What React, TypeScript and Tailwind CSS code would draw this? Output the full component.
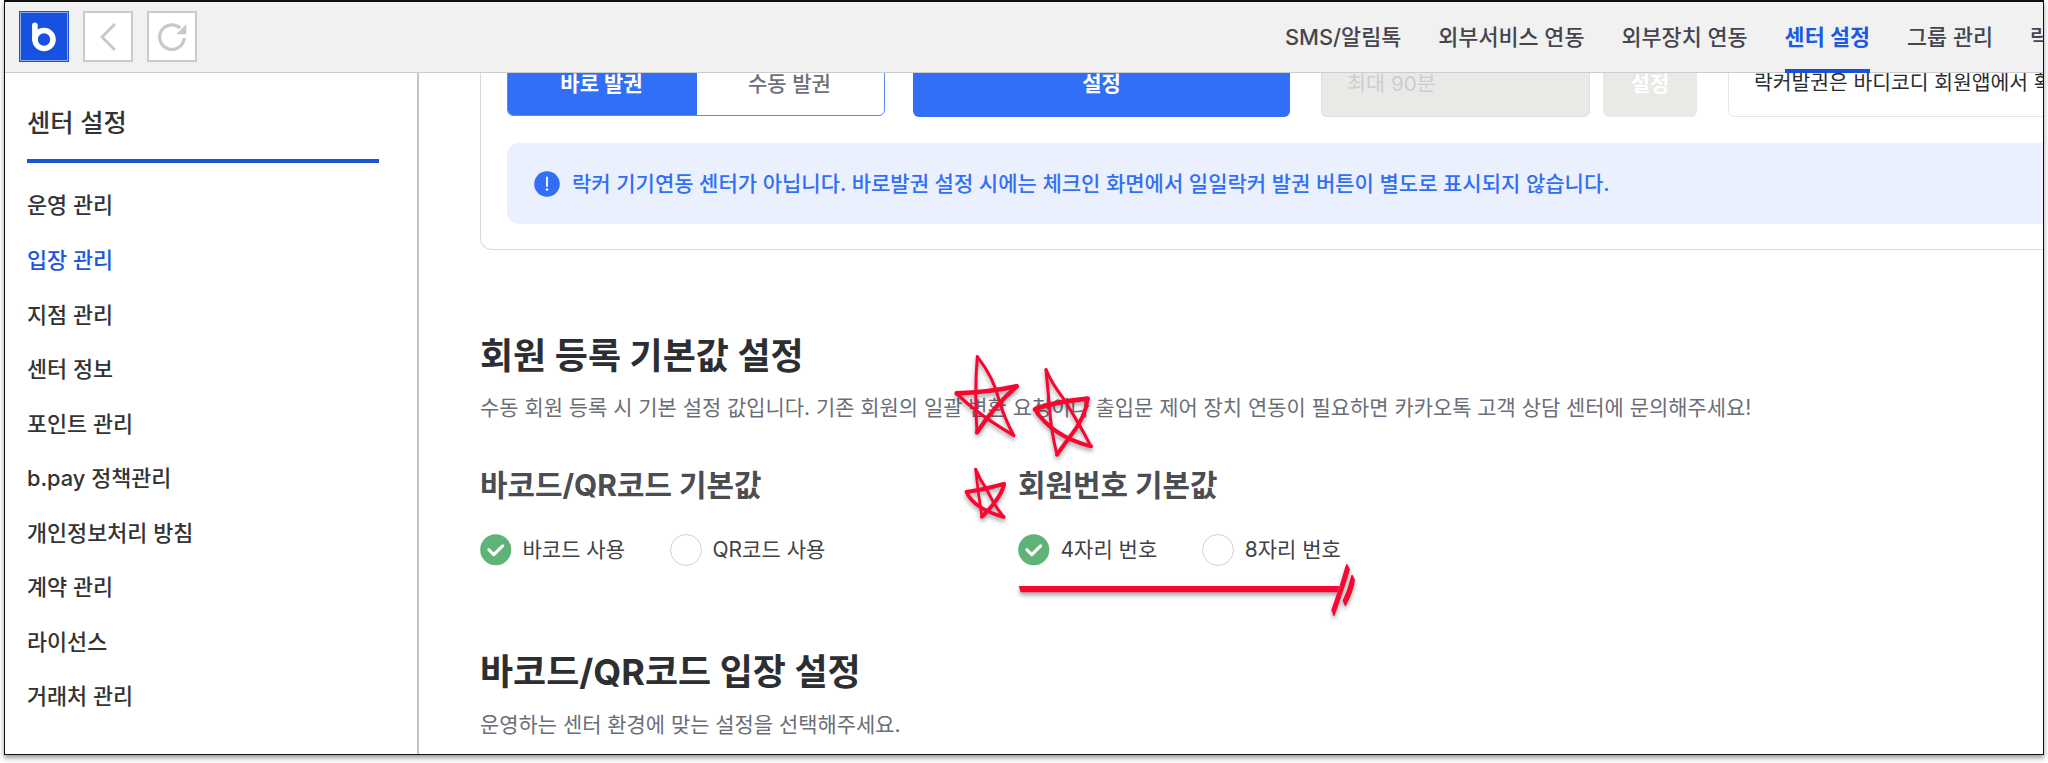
const menus = [
  "운영 관리",
  "입장 관리",
  "지점 관리",
  "센터 정보",
  "포인트 관리",
  "b.pay 정책관리",
  "개인정보처리 방침",
  "계약 관리",
  "라이선스",
  "거래처 관리",
];

const tabs = ["SMS/알림톡", "외부서비스 연동", "외부장치 연동", "센터 설정", "그룹 관리", "락커"];

const Header = () => (
  <header className="relative z-10 flex h-[71px] shrink-0 items-start border-b border-[#cdcdcd] bg-[#f1f1f1] pl-[14px] pt-[9px]">
    <div className="flex h-[51px] w-[50px] items-center justify-center bg-[#1850e0] outline outline-1 -outline-offset-2 outline-[#8fabf0]">
      <svg viewBox="0 0 24 30" className="h-[30px] w-6" fill="none" stroke="#fff" strokeWidth="5.6" strokeLinecap="round">
        <path d="M2.9 3.2v14" />
        <circle cx="12" cy="17.5" r="9" />
      </svg>
    </div>
    <button className="ml-[14px] flex h-[51px] w-[50px] items-center justify-center border-2 border-[#cacaca] bg-white">
      <svg viewBox="0 0 16 28" className="h-7 w-4" fill="none" stroke="#c8c8c8" strokeWidth="3">
        <path d="M15 1 2 14l13 13" />
      </svg>
    </button>
    <button className="ml-[14px] flex h-[51px] w-[50px] items-center justify-center border-2 border-[#cacaca] bg-white">
      <svg viewBox="0 0 30 30" className="h-[30px] w-[30px]" fill="none" stroke="#c8c8c8" strokeWidth="3.2">
        <path d="M27.2 16a12.3 12.3 0 1 1-4-10" />
        <path d="M29.3 2v10.3h-10z" fill="#c8c8c8" stroke="none" />
      </svg>
    </button>

    <nav className="ml-[1088px] flex w-[758px] gap-[37px] overflow-hidden whitespace-nowrap text-[21.8px] font-medium text-[#44454f]">
      {tabs.map((tab) => (
        <a
          key={tab}
          className={
            tab === "센터 설정"
              ? "flex h-[62px] items-center border-b-4 border-[#1850d8] pb-[6px] font-bold text-[#1a5ae6]"
              : "flex h-[62px] items-center pb-[10px]"
          }
        >
          {tab}
        </a>
      ))}
    </nav>
  </header>
);

const Sidebar = () => (
  <aside className="w-[414px] shrink-0 border-r-2 border-[#c4c4c4] pl-[22px] pr-[38px] pt-[32px] text-[#333]">
    <h2 className="flex h-[36px] items-center text-[25.3px] font-medium">센터 설정</h2>
    <div className="mt-[18px] h-1 bg-[#1c56d2]" />
    <ul className="mt-[15.5px] text-[21.8px] font-medium">
      {menus.map((menu) => (
        <li
          key={menu}
          className={menu === "입장 관리" ? "flex h-[54.55px] items-center text-[#1c56dc]" : "flex h-[54.55px] items-center"}
        >
          {menu}
        </li>
      ))}
    </ul>
  </aside>
);

const Radio = ({ label, checked = false }: { label: string; checked?: boolean }) => (
  <label className="flex h-8 items-center gap-[11px] whitespace-nowrap text-[21px] text-[#404246]">
    {checked ? (
      <svg viewBox="0 0 32 32" className="h-[31.5px] w-[31.5px]" fill="none">
        <circle cx="16" cy="16" r="15.8" fill="#5fb377" />
        <path d="m9 16 5 5 9-9" stroke="#fff" strokeWidth="3.2" strokeLinecap="round" strokeLinejoin="round" />
      </svg>
    ) : (
      <span className="h-[31.5px] w-[31.5px] rounded-full border border-[#d0d0d0] bg-white" />
    )}
    {label}
  </label>
);

const LockerCard = () => (
  <section className="h-[177px] w-[1700px] shrink-0 rounded-bl-xl border-b border-l border-[#d9dbde] pl-[26px] text-[21px]">
    <div className="flex h-[44px] items-end whitespace-nowrap">
      <div className="mb-px flex h-[60px] w-[378px] overflow-hidden rounded-b-md border border-[#5b8ae8]">
        <div className="flex w-[189px] items-center justify-center bg-[#306ff6] pb-[5px] pr-[2px] font-bold text-white">바로 발권</div>
        <div className="flex flex-1 items-center justify-center pb-[5px] pr-[2px] font-medium text-[#6d7078]">수동 발권</div>
      </div>
      <div className="ml-[28px] flex h-[66px] w-[377px] items-center justify-center rounded-md bg-[#306ff6] pb-[1px] font-bold text-white">
        설정
      </div>
      <div className="ml-[31px] flex h-[66px] w-[269px] items-center rounded-md border border-[#dfe0dd] bg-[#e9eae6] pb-[1px] pl-[25px] text-[20.7px] text-[#cccdd1]">
        최대 90분
      </div>
      <div className="ml-[13px] flex h-[66px] w-[94px] items-center justify-center rounded-md bg-[#e9eae6] pb-[1px] font-bold text-white">
        설정
      </div>
      <div className="ml-[31px] flex h-[66px] w-[400px] items-center rounded-md border border-[#e4e5e7] pb-[1px] pl-[25px] text-[20.4px] text-[#2c2d30]">
        락커발권은 바디코디 회원앱에서 확인
      </div>
    </div>
    <div className="mt-[26px] flex h-[81px] items-center rounded-xl bg-[#ebf0fe] pl-[27px] font-medium text-[#306ff6]">
      <svg viewBox="0 0 26 26" className="h-[26px] w-[26px]">
        <circle cx="13" cy="13" r="12.8" fill="#306ff6" />
        <path d="M13 6.5v8.5" stroke="#fff" strokeWidth="1.8" strokeLinecap="round" />
        <circle cx="13" cy="18.5" r="1.2" fill="#fff" />
      </svg>
      <span className="ml-[12px] whitespace-nowrap">
        락커 기기연동 센터가 아닙니다. 바로발권 설정 시에는 체크인 화면에서 일일락커 발권 버튼이 별도로 표시되지 않습니다.
      </span>
    </div>
  </section>
);

/* hand-drawn red marks lying over the page */
const Marks = () => (
  <svg
    viewBox="0 0 1440 900"
    className="pointer-events-none absolute left-[920px] top-[330px] z-20 h-[300px] w-[480px] drop-shadow-[0_3px_2px_rgba(0,0,0,0.35)]"
    fill="none"
    stroke="#fb0530"
    strokeLinecap="round"
    strokeLinejoin="round"
  >
    <path d="M172 80Q222 145 237 210Q252 262 281 316" strokeWidth="9" />
    <path d="M281 316Q168 250 110 190" strokeWidth="10" />
    <path d="M110 190Q200 188 290 169" strokeWidth="14" />
    <path d="M290 169Q225 225 171 307" strokeWidth="13" />
    <path d="M171 307Q163 190 172 80" strokeWidth="9" />

    <path d="M378 119Q395 160 430 205Q480 285 513 349" strokeWidth="9" />
    <path d="M513 349Q395 318 345 238" strokeWidth="12" />
    <path d="M345 238Q400 216 503 206" strokeWidth="14" />
    <path d="M503 206Q498 260 450 320Q430 346 411 374" strokeWidth="12" />
    <path d="M411 374Q392 300 388 225L378 119" strokeWidth="9" />

    <path d="M167 418Q180 450 200 478Q225 530 251 561" strokeWidth="9" />
    <path d="M251 561Q160 535 140 486" strokeWidth="11" />
    <path d="M140 486Q195 478 252 462" strokeWidth="12" />
    <path d="M252 462Q246 500 186 560" strokeWidth="12" />
    <path d="M186 560Q174 490 167 418" strokeWidth="8" />

    <path d="M296 768H1258L1252 787H302z" fill="#fb0530" stroke="none" />
    <path d="M1280 704 1288 718Q1272 772 1242 856L1236 840Q1262 770 1280 704z" fill="#fb0530" strokeWidth="4" />
    <path d="M1296 736 1303 750Q1298 786 1276 826L1270 812Q1286 778 1296 736z" fill="#fb0530" strokeWidth="4" />
  </svg>
);

export default function App() {
  return (
    <div className="relative h-[763px] w-[2048px] overflow-hidden bg-white pl-1 font-['Inter','Noto_Sans_CJK_KR',sans-serif]">
      <div className="flex h-[755px] w-[2040px] flex-col overflow-hidden border border-t-2 border-[#111] bg-white shadow-[0_3px_5px_rgba(0,0,0,0.4)]">
        <Header />
        <div className="flex min-h-0 flex-1">
          <Sidebar />
          <main className="flex min-w-0 flex-1 flex-col overflow-hidden pl-[61px]">
            <LockerCard />

            <h1 className="mt-[80px] flex h-[52px] shrink-0 items-center text-[36px] font-bold text-[#2c2e31]">
              회원 등록 기본값 설정
            </h1>
            <p className="mt-[10px] flex h-[32px] shrink-0 items-center whitespace-nowrap text-[20.93px] text-[#6b6e77]">
              수동 회원 등록 시 기본 설정 값입니다. 기존 회원의 일괄 변환 요청이나 출입문 제어 장치 연동이 필요하면 카카오톡 고객 상담 센터에 문의해주세요!
            </p>

            <div className="mt-[39px] flex shrink-0">
              <div className="w-[538px]">
                <h3 className="flex h-[44px] items-center text-[29.9px] font-bold text-[#4b4d51]">바코드/QR코드 기본값</h3>
                <div className="mt-[27px] flex gap-[45px]">
                  <Radio label="바코드 사용" checked />
                  <Radio label="QR코드 사용" />
                </div>
              </div>
              <div>
                <h3 className="flex h-[44px] items-center text-[29.9px] font-bold text-[#4b4d51]">회원번호 기본값</h3>
                <div className="mt-[27px] flex gap-[45px]">
                  <Radio label="4자리 번호" checked />
                  <Radio label="8자리 번호" />
                </div>
              </div>
            </div>

            <h1 className="mt-[80px] flex h-[52px] shrink-0 items-center text-[36px] font-bold text-[#2c2e31]">
              바코드/QR코드 입장 설정
            </h1>
            <p className="mt-[11px] flex h-[32px] shrink-0 items-center whitespace-nowrap text-[20.93px] text-[#6b6e77]">
              운영하는 센터 환경에 맞는 설정을 선택해주세요.
            </p>
          </main>
        </div>
      </div>
      <Marks />
    </div>
  );
}
